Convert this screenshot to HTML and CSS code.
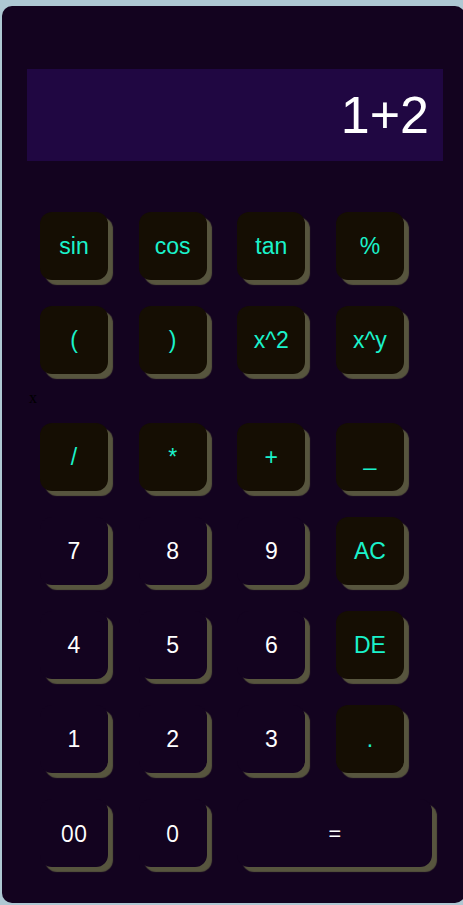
FILE: index.html
```html
<!DOCTYPE html>
<html>
<head>
<meta charset="utf-8">
<link rel="stylesheet" href="styles.css">
</head>
<body>
<div class="calc">
  <div class="display">1+2</div>
  <div class="keys">
    <div class="key op">sin</div>
    <div class="key op">cos</div>
    <div class="key op">tan</div>
    <div class="key op">%</div>
    <div class="key op">(</div>
    <div class="key op">)</div>
    <div class="key op">x^2</div>
    <div class="key op">x^y</div>
  </div>
  <div class="stray">x</div>
  <div class="keys">
    <div class="key op">/</div>
    <div class="key op">*</div>
    <div class="key op">+</div>
    <div class="key op">_</div>
    <div class="key num">7</div>
    <div class="key num">8</div>
    <div class="key num">9</div>
    <div class="key op">AC</div>
    <div class="key num">4</div>
    <div class="key num">5</div>
    <div class="key num">6</div>
    <div class="key op">DE</div>
    <div class="key num">1</div>
    <div class="key num">2</div>
    <div class="key num">3</div>
    <div class="key op">.</div>
    <div class="key num alt">00</div>
    <div class="key num alt">0</div>
    <div class="key num eq">=</div>
  </div>
</div>
</body>
</html>
```

FILE: styles.css
```css
html, body {
  margin: 0;
  padding: 0;
}
body {
  background: #aec8d3;
  width: 463px;
  height: 905px;
  overflow: hidden;
}
.calc {
  margin: 6px 0 0 2px;
  width: 463px;
  height: 897px;
  background: #13031f;
  border-radius: 10px;
  padding: 63px 0 0 25px;
  box-sizing: border-box;
}
.display {
  width: 416px;
  height: 92px;
  background: #200742;
  color: #ffffff;
  font-family: "Liberation Sans", Arial, sans-serif;
  font-size: 52px;
  line-height: 92px;
  text-align: right;
  padding-right: 14px;
  box-sizing: border-box;
  margin-bottom: 51px;
}
.keys {
  margin-left: 13px;
  display: grid;
  grid-template-columns: repeat(4, 68px);
  grid-auto-rows: 68px;
  column-gap: 30.67px;
  row-gap: 26px;
}
.stray {
  font-family: "Liberation Serif", "Times New Roman", serif;
  font-size: 16px;
  line-height: 18px;
  color: #000;
  margin: 15px 0 16px 2px;
}
.key {
  display: flex;
  align-items: center;
  justify-content: center;
  border-radius: 12px;
  box-shadow: 5px 5px 1px #57553e;
  font-family: "Liberation Sans", Arial, sans-serif;
  font-size: 23px;
}
.op {
  background: #150e03;
  color: #1af2cb;
}
.num {
  background: #13031f;
  color: #ffffff;
}
.alt {
  font-family: "Open Sans", sans-serif;
}
.eq {
  grid-column: 3 / span 2;
  width: 195px;
  font-family: "Open Sans", sans-serif;
}
```
